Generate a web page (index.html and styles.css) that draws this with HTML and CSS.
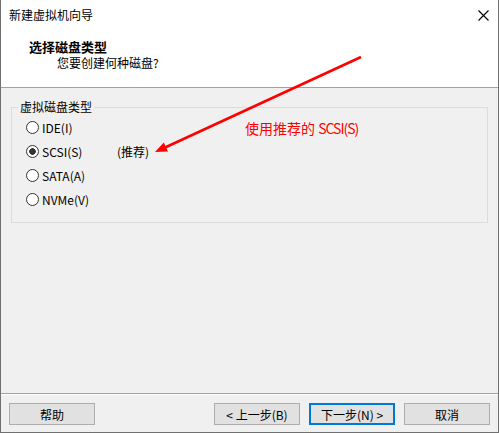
FILE: index.html
```html
<!DOCTYPE html>
<html lang="zh-CN">
<head>
<meta charset="UTF-8">
<title>新建虚拟机向导</title>
<link rel="stylesheet" href="styles.css">
</head>
<body>

<div class="wizard">
  <div class="top">
    <div class="titlebar">
      <span class="title">新建虚拟机向导</span>
      <svg class="close" width="11" height="11" viewBox="0 0 11 11">
        <path d="M0.5 0.5 L10.5 10.5 M10.5 0.5 L0.5 10.5" stroke="#000" stroke-width="1.1"/>
      </svg>
    </div>
    <div class="header">
      <div class="header-title">选择磁盘类型</div>
      <div class="header-sub">您要创建何种磁盘?</div>
    </div>
  </div>

  <div class="content">
    <fieldset class="group">
      <legend>虚拟磁盘类型</legend>
      <div class="option"><span class="radio"></span><span class="label">IDE(I)</span></div>
      <div class="option"><span class="radio checked"></span><span class="label">SCSI(S)</span><span class="hint">(推荐)</span></div>
      <div class="option"><span class="radio"></span><span class="label">SATA(A)</span></div>
      <div class="option"><span class="radio"></span><span class="label">NVMe(V)</span></div>
    </fieldset>
  </div>

  <div class="footer">
    <button class="btn">帮助</button>
    <div class="nav">
      <button class="btn">&lt; 上一步(B)</button>
      <button class="btn default">下一步(N) &gt;</button>
      <button class="btn">取消</button>
    </div>
  </div>

  <!-- annotation -->
  <div class="note">使用推荐的 <span class="note-latin">SCSI(S)</span></div>
  <svg class="arrow" width="499" height="433" viewBox="0 0 499 433">
    <line x1="361" y1="57" x2="164" y2="148" stroke="#f00" stroke-width="2.5"/>
    <polygon points="155,152 168,151.5 163.8,142.5" fill="#f00"/>
  </svg>
</div>

</body>
</html>
```

FILE: styles.css
```css
body {
  margin: 0;
  padding: 0;
  font-family: "Noto Sans CJK SC", "Noto Sans", sans-serif;
  font-size: 12px;
  color: #000;
}
.wizard {
  position: relative;
  width: 499px;
  height: 433px;
  box-sizing: border-box;
  border: 1px solid #707070;
  border-top: none;
  background-color: #f0f0f0;
  display: flex;
  flex-direction: column;
}
.top {
  height: 87px;
  background-color: #fff;
  border-bottom: 1px solid #a0a0a0;
}
.titlebar {
  height: 30px;
  display: flex;
  align-items: center;
  justify-content: space-between;
  padding: 0 9px 0 8px;
}
.title {
  line-height: 16px;
}
.header {
  padding: 9px 0 0 28px;
}
.header-title {
  font-size: 13px;
  font-weight: bold;
  line-height: 16px;
}
.header-sub {
  padding-left: 28px;
  line-height: 16px;
}
.content {
  flex: 1;
}
.group {
  margin: 12px 10px 0 10px;
  padding: 1px 0 11px 0;
  border: 1px solid #dcdcdc;
}
.group legend {
  margin-left: 6px;
  padding: 0 2px;
  line-height: 14px;
}
.option {
  height: 24px;
  padding-left: 14px;
  display: flex;
  align-items: center;
}
.radio {
  width: 13px;
  height: 13px;
  box-sizing: border-box;
  border: 1px solid #333;
  border-radius: 50%;
  background-color: #fff;
  margin-right: 3px;
}
.radio.checked {
  background: radial-gradient(circle, #333 0 3px, #fff 3.6px);
}
.label {
  width: 75px;
}
.footer {
  height: 39px;
  border-top: 1px solid #a0a0a0;
  box-shadow: inset 0 1px #fff;
  display: flex;
  justify-content: space-between;
  align-items: flex-start;
  padding: 9px 8px 0 8px;
  box-sizing: border-box;
}
.nav {
  display: flex;
  gap: 9px;
}
.btn {
  width: 86px;
  height: 22px;
  padding: 0;
  font-family: inherit;
  font-size: 12px;
  color: #000;
  background-color: #e1e1e1;
  border: 1px solid #adadad;
}
.btn.default {
  border: 2px solid #0078d7;
}
.note {
  position: absolute;
  left: 244px;
  top: 119px;
  font-size: 14px;
  line-height: 18px;
  color: #f00;
}
.note-latin {
  letter-spacing: -1px;
}
.arrow {
  position: absolute;
  left: -1px;
  top: 0;
  pointer-events: none;
}
```
